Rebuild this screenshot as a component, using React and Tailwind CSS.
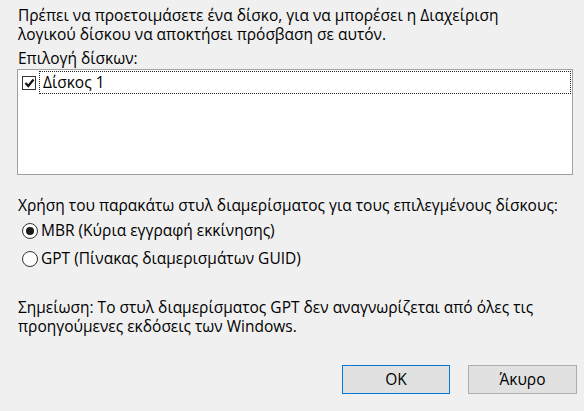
import React, { useState } from "react";

const Radio = ({ checked, onClick, label }) => (
  <div className="flex items-center h-[28px] cursor-pointer" onClick={onClick}>
    <span className="w-[16px] h-[16px] rounded-full border border-[#333] bg-white flex items-center justify-center ml-[22px]">
      {checked && <span className="w-[8px] h-[8px] rounded-full bg-[#1a1a1a]" />}
    </span>
    <span className="ml-[3px]">{label}</span>
  </div>
);

const App = () => {
  const [checked, setChecked] = useState(true);
  const [style, setStyle] = useState("mbr");

  return (
    <div
      className="w-[584px] h-[411px] bg-[#f0f0f0] text-[15.5px] text-black flex flex-col overflow-hidden"
      style={{ fontFamily: '"Open Sans", "Noto Sans", sans-serif' }}
    >
      {/* INTRO */}
      <div className="pl-[18px] pt-[6px] leading-[19px]">
        <p>Πρέπει να προετοιμάσετε ένα δίσκο, για να μπορέσει η Διαχείριση</p>
        <p>λογικού δίσκου να αποκτήσει πρόσβαση σε αυτόν.</p>
        <p className="mt-[5px]">Επιλογή δίσκων:</p>
      </div>

      {/* DISK LIST */}
      <div className="ml-[17px] mt-[1px] w-[556px] h-[106px] border border-[#a0a0a0] bg-white p-[1px]">
        <div className="flex items-center h-[23px]">
          <span
            className="ml-[3px] w-[14px] h-[14px] border border-[#333] bg-white flex items-center justify-center cursor-pointer"
            onClick={() => setChecked(!checked)}
          >
            {checked && (
              <svg width="11" height="10" viewBox="0 0 11 10">
                <path d="M1.5 5 L4.3 8 L9.5 1.5" fill="none" stroke="#111" strokeWidth="2.2" />
              </svg>
            )}
          </span>
          <span className="ml-[3px] flex-1 h-full border border-dotted border-[#222] flex items-center pl-[3px]">
            Δίσκος 1
          </span>
        </div>
      </div>

      {/* PARTITION STYLE */}
      <p className="pl-[18px] mt-[21px] leading-[19px]">
        Χρήση του παρακάτω στυλ διαμερίσματος για τους επιλεγμένους δίσκους:
      </p>
      <div className="mt-[2px]">
        <Radio checked={style === "mbr"} onClick={() => setStyle("mbr")} label="MBR (Κύρια εγγραφή εκκίνησης)" />
        <Radio checked={style === "gpt"} onClick={() => setStyle("gpt")} label="GPT (Πίνακας διαμερισμάτων GUID)" />
      </div>

      {/* NOTE */}
      <div className="pl-[18px] mt-[25px] leading-[19px]">
        <p>Σημείωση: Το στυλ διαμερίσματος GPT δεν αναγνωρίζεται από όλες τις</p>
        <p>προηγούμενες εκδόσεις των Windows.</p>
      </div>

      {/* BUTTONS */}
      <div className="flex justify-end gap-[18px] pr-[7px] mt-[29px]">
        <button className="w-[108px] h-[29px] bg-[#e1e1e1] border border-[#0078d7]">OK</button>
        <button className="w-[109px] h-[29px] bg-[#e1e1e1] border border-[#adadad]">Άκυρο</button>
      </div>
    </div>
  );
};

export default App;
